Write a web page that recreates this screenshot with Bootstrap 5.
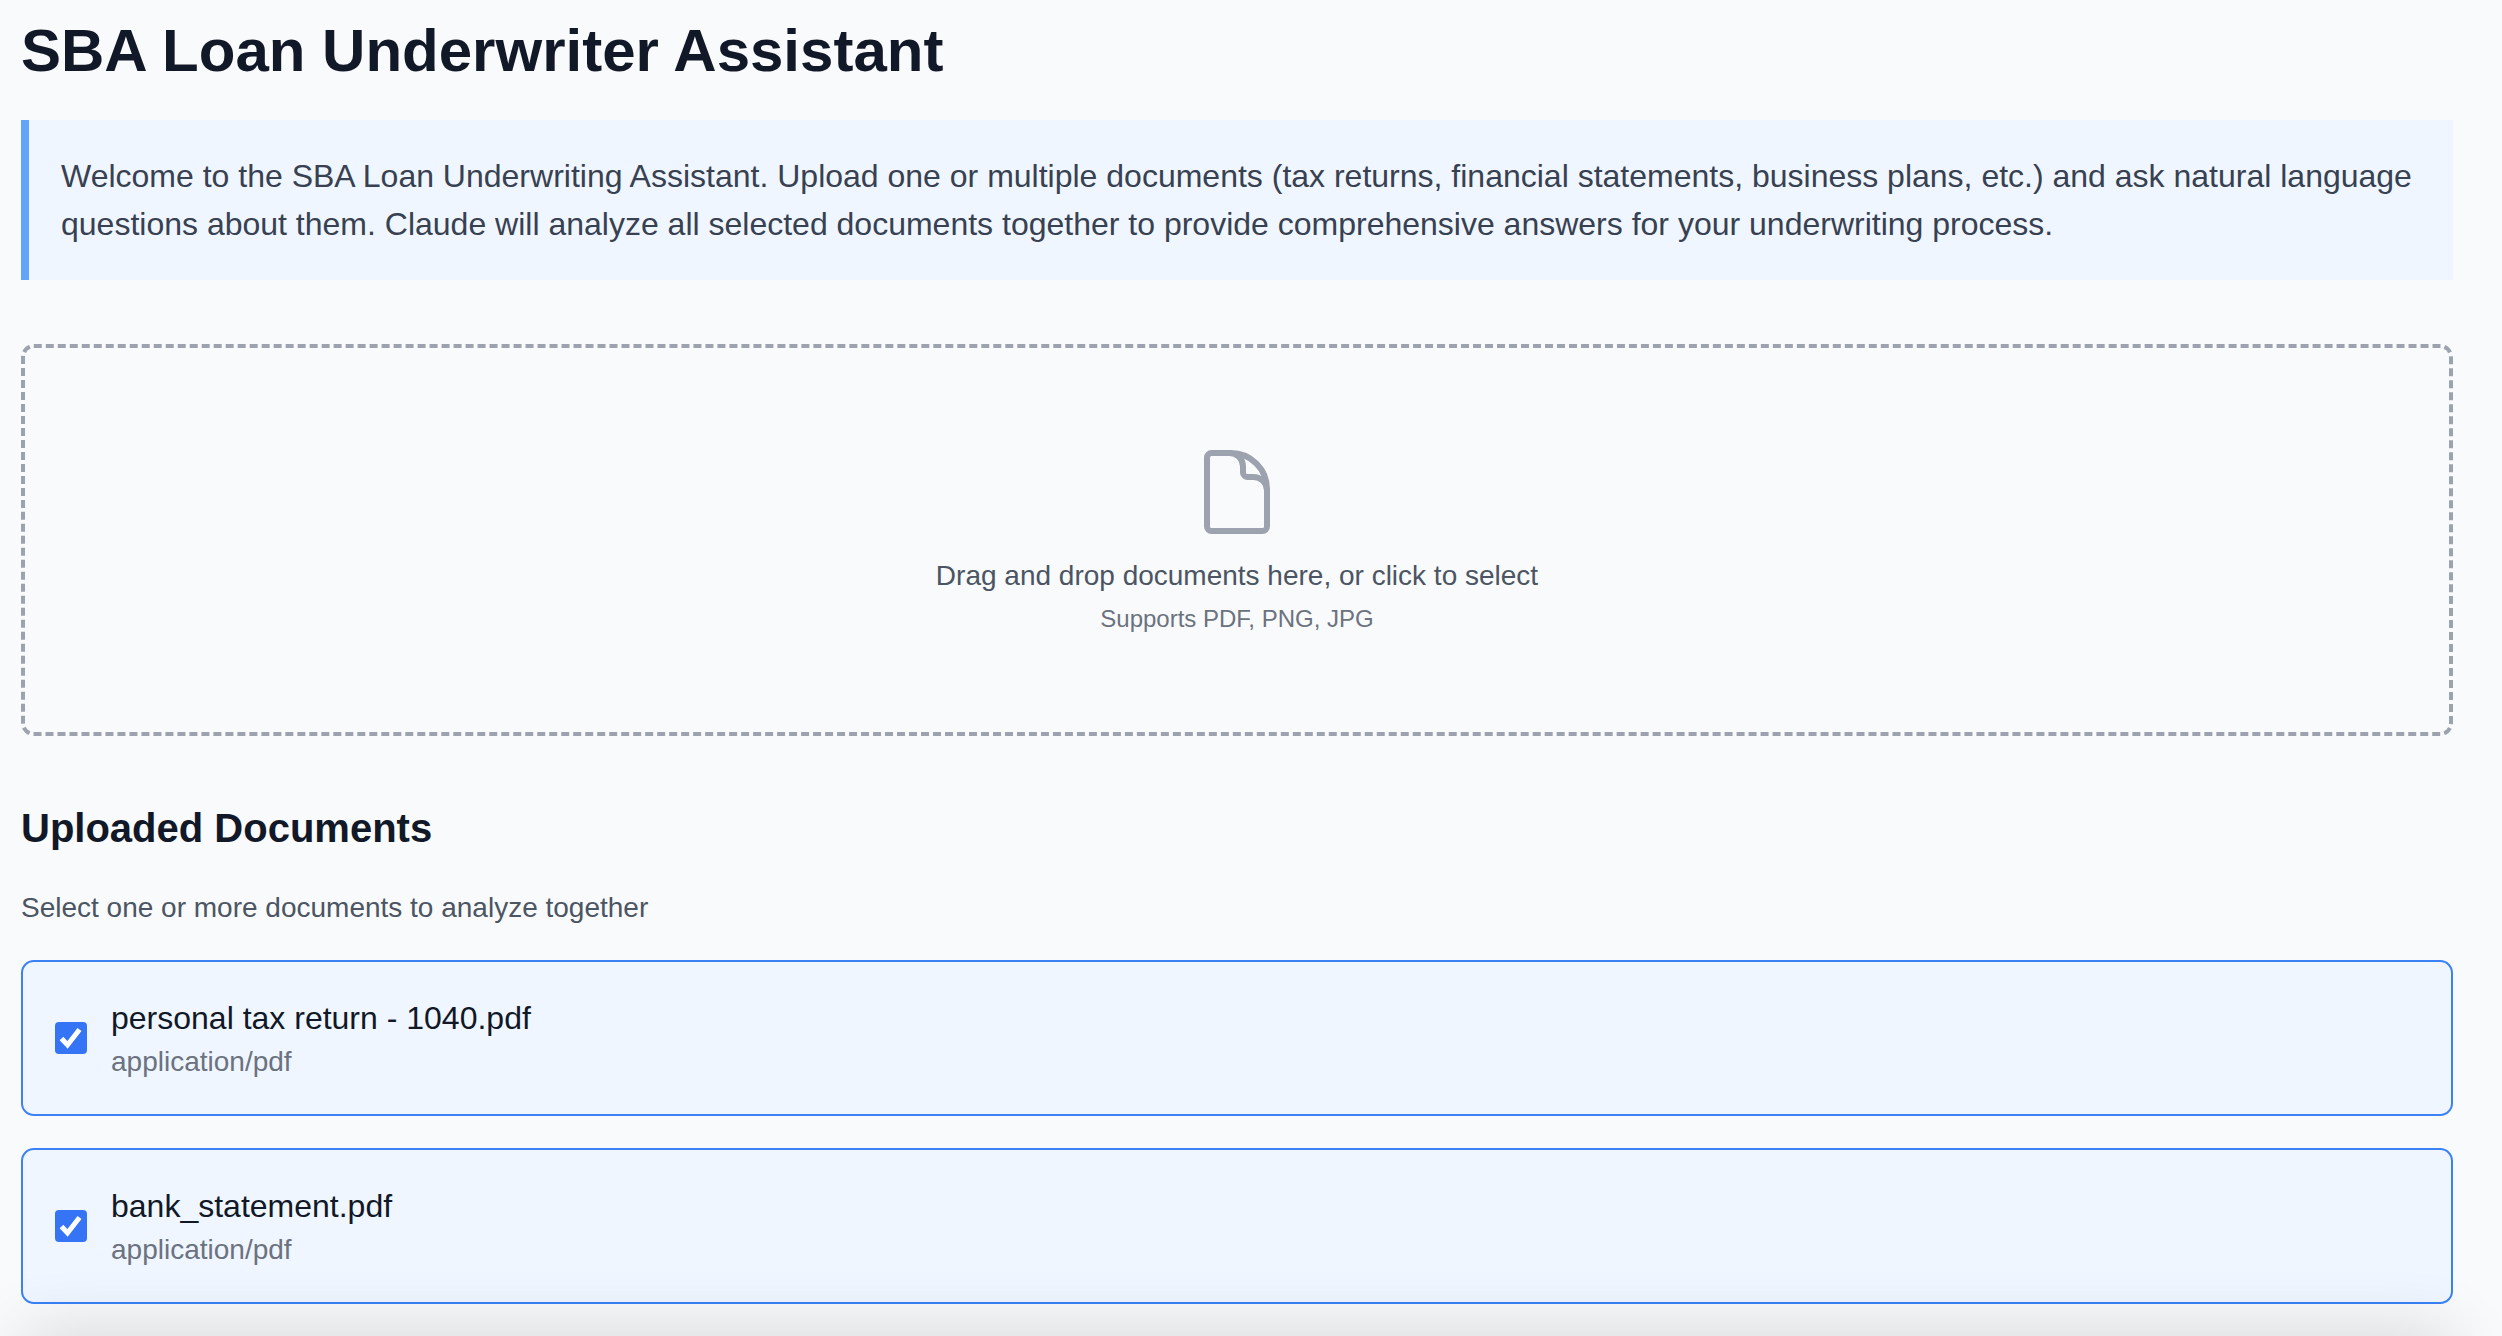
<!DOCTYPE html>
<html lang="en">
<head>
<meta charset="utf-8">
<title>SBA Loan Underwriter Assistant</title>
<link rel="stylesheet" href="https://cdn.jsdelivr.net/npm/bootstrap@5.3.0/dist/css/bootstrap.min.css">
<style>
html, body { height: 100%; overflow: hidden; }
body { background: #f9fafb; font-family: "Liberation Sans", Arial, sans-serif; color: #111827; }
.page-wrap { padding: 0 49px 0 21px; }
.page-title { font-size: 60px; line-height: 64px; font-weight: 700; color: #111827; margin: 19px 0 37px; }
.intro-box { background: #eff6ff; border-left: 8px solid #60a5fa; padding: 32px; height: 160px; margin-bottom: 64px; }
.intro-box p { font-size: 32px; line-height: 48px; color: #374151; margin: 0; }
.drop-zone { height: 392px; border: 4px dashed #9ca3af; border-radius: 12.8px; padding-top: 96px; text-align: center; margin-bottom: 64px; }
.drop-zone svg { display: block; margin: 0 auto; width: 96px; height: 96px; color: #9ca3af; }
.drop-main { font-size: 28px; line-height: 42px; color: #4b5563; margin: 15px 0 0; }
.drop-sub { font-size: 24px; line-height: 36px; color: #6b7280; margin: 4px 0 0; }
.section-title { font-size: 40px; line-height: 56px; font-weight: 700; color: #111827; margin: 0 0 31px; }
.section-help { font-size: 28px; line-height: 42px; color: #4b5563; margin: 0 0 31px; }
.doc-item { height: 156px; border: 2px solid #3b82f6; border-radius: 12.8px; background: #eff6ff; padding: 0 32px; margin-bottom: 32px; }
.doc-check, .doc-check:checked { width: 32px; height: 32px; flex: none; margin: 0 24px 0 0; border: 0; border-radius: 4px; background-color: #3574f5; background-size: 100%; opacity: 1;
  background-image: url("data:image/svg+xml,%3csvg xmlns='http://www.w3.org/2000/svg' viewBox='0 0 32 32'%3e%3cpath fill='none' stroke='%23fff' stroke-width='5' d='M6.5 16.5l6 6.5 12-15.5'/%3e%3c/svg%3e"); }
.doc-name { font-size: 32px; line-height: 48px; color: #111827; }
.doc-type { font-size: 28px; line-height: 40px; color: #6b7280; }
.bottom-shade { position: fixed; left: 25px; right: 50px; bottom: -40px; height: 40px; box-shadow: 0 0 66px 0 rgba(0,0,0,.19); }
</style>
</head>
<body>
<div class="page-wrap">
  <h1 class="page-title">SBA Loan Underwriter Assistant</h1>
  <div class="intro-box">
    <p>Welcome to the SBA Loan Underwriting Assistant. Upload one or multiple documents (tax returns, financial statements, business plans, etc.) and ask natural language questions about them. Claude will analyze all selected documents together to provide comprehensive answers for your underwriting process.</p>
  </div>
  <div class="drop-zone">
    <svg viewBox="0 0 24 24" fill="none" stroke="currentColor" stroke-width="1.5" stroke-linecap="round" stroke-linejoin="round"><path d="M19.5 14.25v-2.625a3.375 3.375 0 00-3.375-3.375h-1.5A1.125 1.125 0 0113.5 7.125v-1.5a3.375 3.375 0 00-3.375-3.375H8.25m2.25 0H5.625c-.621 0-1.125.504-1.125 1.125v17.25c0 .621.504 1.125 1.125 1.125h12.75c.621 0 1.125-.504 1.125-1.125V11.25a9 9 0 00-9-9z"/></svg>
    <p class="drop-main">Drag and drop documents here, or click to select</p>
    <p class="drop-sub">Supports PDF, PNG, JPG</p>
  </div>
  <h2 class="section-title">Uploaded Documents</h2>
  <p class="section-help">Select one or more documents to analyze together</p>
  <div class="doc-item d-flex align-items-center">
    <input class="form-check-input doc-check" type="checkbox" checked>
    <div>
      <div class="doc-name">personal tax return - 1040.pdf</div>
      <div class="doc-type">application/pdf</div>
    </div>
  </div>
  <div class="doc-item d-flex align-items-center">
    <input class="form-check-input doc-check" type="checkbox" checked>
    <div>
      <div class="doc-name">bank_statement.pdf</div>
      <div class="doc-type">application/pdf</div>
    </div>
  </div>
</div>
<div class="bottom-shade"></div>
<script src="https://cdn.jsdelivr.net/npm/bootstrap@5.3.0/dist/js/bootstrap.bundle.min.js"></script>
</body>
</html>
